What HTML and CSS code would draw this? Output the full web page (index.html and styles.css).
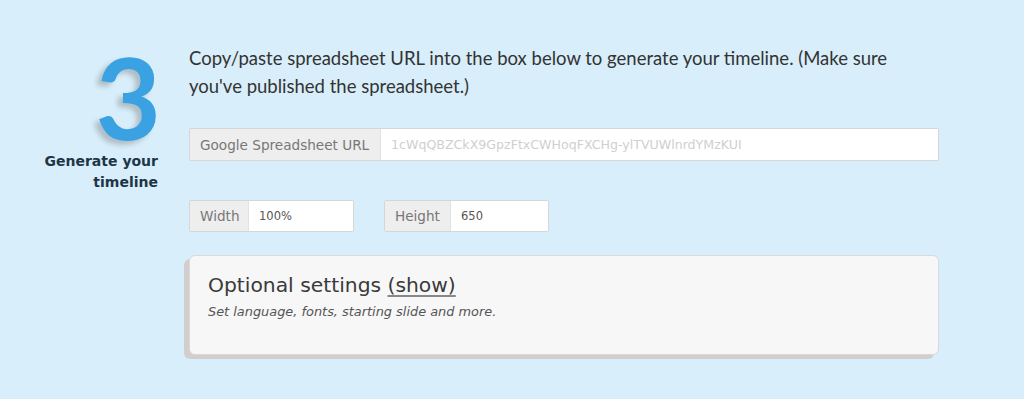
FILE: index.html
```html
<!DOCTYPE html>
<html>
<head>
<meta charset="utf-8">
<link rel="stylesheet" href="styles.css">
</head>
<body>
<div class="step">
  <div class="step-side">
    <div class="step-num">3</div>
    <div class="step-title">Generate your<br>timeline</div>
  </div>
  <div class="step-body">
    <p class="intro">Copy/paste spreadsheet URL into the box below to generate your timeline. (Make sure you've published the spreadsheet.)</p>
    <div class="group group-url">
      <span class="addon addon-url">Google Spreadsheet URL</span>
      <input class="field field-url" type="text" placeholder="1cWqQBZCkX9GpzFtxCWHoqFXCHg-ylTVUWlnrdYMzKUI">
    </div>
    <div class="size-row">
      <div class="group group-small">
        <span class="addon addon-w">Width</span>
        <input class="field" type="text" value="100%">
      </div>
      <div class="group group-small">
        <span class="addon addon-h">Height</span>
        <input class="field" type="text" value="650">
      </div>
    </div>
    <div class="optional">
      <h3 class="opt-title">Optional settings <a class="opt-link" href="#">(show)</a></h3>
      <p class="opt-sub">Set language, fonts, starting slide and more.</p>
    </div>
  </div>
</div>
</body>
</html>
```
FILE: styles.css
```css
html, body {
  margin: 0;
  padding: 0;
  background: #d8eefa;
}
body {
  width: 1024px;
  height: 399px;
  overflow: hidden;
}
.step {
  display: flex;
  padding-top: 40px;
  gap: 31px;
}
.step-side {
  width: 158px;
  text-align: right;
  flex: none;
}
.step-num {
  font-family: Lato, sans-serif;
  font-weight: bold;
  font-size: 113px;
  line-height: 100px;
  height: 102px;
  color: #3aa1e2;
  text-shadow: -5px 4px 5px rgba(80, 80, 80, 0.3);
  margin-right: -3px;
  padding-top: 6px;
}
.step-title {
  font-family: "DejaVu Sans", sans-serif;
  font-weight: bold;
  font-size: 14px;
  line-height: 21px;
  color: #1e3547;
  margin-top: 3px;
}
.step-body {
  width: 750px;
  flex: none;
}
.intro {
  font-family: Lato, sans-serif;
  font-size: 18.5px;
  line-height: 28px;
  color: #333;
  margin: 4px 0 0 0;
}
.group {
  display: flex;
  height: 33px;
  box-sizing: border-box;
  border: 1px solid #d6d6d6;
  border-radius: 2px;
  background: #fff;
}
.group-url {
  margin-top: 28px;
}
.addon {
  display: flex;
  align-items: center;
  padding: 0 10px;
  background: #eeeeee;
  border-right: 1px solid #e2e2e2;
  font-family: "DejaVu Sans", sans-serif;
  font-size: 13.6px;
  color: #777;
  flex: none;
  box-sizing: border-box;
}
.addon-url { width: 191px; }
.addon-w { width: 59px; }
.addon-h { width: 66px; }
.field {
  flex: 1;
  min-width: 0;
  border: none;
  outline: none;
  background: #fff;
  padding: 0 10px;
  font-family: "DejaVu Sans", sans-serif;
  font-size: 11.5px;
  color: #555;
}
.field-url {
  font-size: 12.6px;
}
.field::placeholder {
  color: #cfcfcf;
}
.size-row {
  display: flex;
  gap: 30px;
  margin-top: 39px;
}
.group-small {
  width: 165px;
  height: 32px;
}
.optional {
  margin-top: 23px;
  height: 100px;
  box-sizing: border-box;
  background: #f7f7f7;
  border: 1px solid #d9d9d9;
  border-radius: 6px;
  box-shadow: -5px 4px 0 #d2cece;
  padding: 16px 18px;
}
.opt-title {
  font-family: "DejaVu Sans", sans-serif;
  font-weight: normal;
  font-size: 20.3px;
  line-height: 26px;
  color: #3a3a3a;
  margin: 0;
}
.opt-link {
  color: #3a3a3a;
  text-decoration: underline;
  text-decoration-color: #888;
  text-underline-offset: 3px;
}
.opt-sub {
  font-family: "DejaVu Sans", sans-serif;
  font-style: italic;
  font-size: 12.9px;
  color: #555;
  margin: 6px 0 0 0;
}
```
